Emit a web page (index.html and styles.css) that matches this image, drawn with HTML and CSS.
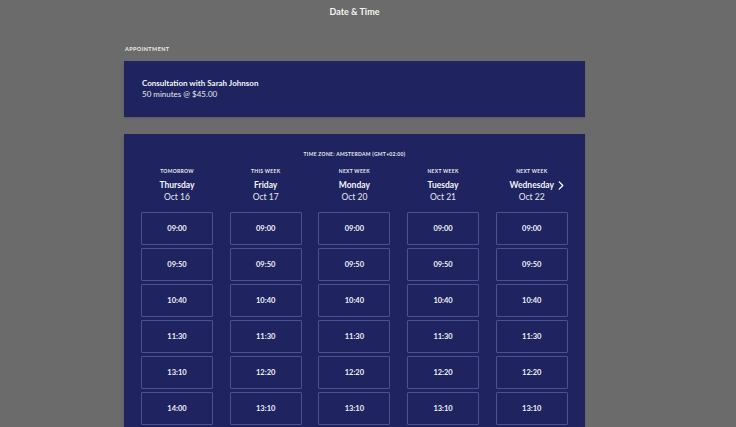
FILE: index.html
```html
<!DOCTYPE html>
<html>
<head>
<meta charset="utf-8">
<link rel="stylesheet" href="styles.css">
</head>
<body>
<div class="page">
  <h1 class="title">Date &amp; Time</h1>
  <div class="label">APPOINTMENT</div>
  <div class="card appt">
    <div class="appt-name">Consultation with Sarah Johnson</div>
    <div class="appt-meta">50 minutes @ $45.00</div>
  </div>
  <div class="card picker">
    <div class="tz">TIME ZONE: AMSTERDAM (GMT+02:00)</div>
    <div class="cols">
      <div class="col">
        <div class="day-head"><div class="when">TOMORROW</div><div class="dname">Thursday</div><div class="ddate">Oct 16</div></div>
        <button class="slot">09:00</button><button class="slot">09:50</button><button class="slot">10:40</button><button class="slot">11:30</button><button class="slot">13:10</button><button class="slot">14:00</button>
      </div>
      <div class="col">
        <div class="day-head"><div class="when">THIS WEEK</div><div class="dname">Friday</div><div class="ddate">Oct 17</div></div>
        <button class="slot">09:00</button><button class="slot">09:50</button><button class="slot">10:40</button><button class="slot">11:30</button><button class="slot">12:20</button><button class="slot">13:10</button>
      </div>
      <div class="col">
        <div class="day-head"><div class="when">NEXT WEEK</div><div class="dname">Monday</div><div class="ddate">Oct 20</div></div>
        <button class="slot">09:00</button><button class="slot">09:50</button><button class="slot">10:40</button><button class="slot">11:30</button><button class="slot">12:20</button><button class="slot">13:10</button>
      </div>
      <div class="col">
        <div class="day-head"><div class="when">NEXT WEEK</div><div class="dname">Tuesday</div><div class="ddate">Oct 21</div></div>
        <button class="slot">09:00</button><button class="slot">09:50</button><button class="slot">10:40</button><button class="slot">11:30</button><button class="slot">12:20</button><button class="slot">13:10</button>
      </div>
      <div class="col">
        <div class="day-head"><div class="when">NEXT WEEK</div><div class="dname">Wednesday<svg class="next" viewBox="0 0 6 10" width="6" height="9"><path d="M1 1 L5 5 L1 9" fill="none" stroke="#ffffff" stroke-width="1.4" stroke-linecap="round" stroke-linejoin="round"/></svg></div><div class="ddate">Oct 22</div></div>
        <button class="slot">09:00</button><button class="slot">09:50</button><button class="slot">10:40</button><button class="slot">11:30</button><button class="slot">12:20</button><button class="slot">13:10</button>
      </div>
    </div>
  </div>
</div>
</body>
</html>
```
FILE: styles.css
```css
html, body {
  margin: 0;
  padding: 0;
  background: #6b6b6b;
  height: 100%;
  overflow: hidden;
}
body {
  font-family: Lato, "Open Sans", sans-serif;
  color: #ffffff;
}
.page {
  width: 461px;
  margin-left: 124px;
}
.title {
  margin: 0;
  padding-top: 6px;
  text-align: center;
  font-size: 9px;
  font-weight: 700;
  line-height: 11px;
  color: #f4f4f4;
}
.label {
  margin-top: 28px;
  padding-left: 1px;
  font-size: 5.5px;
  font-weight: 700;
  letter-spacing: 0.4px;
  line-height: 8px;
  color: #eeeeee;
}
.card {
  background: #1f2461;
  box-shadow: 0 1px 2px rgba(0,0,0,0.15);
}
.appt {
  margin-top: 8px;
  height: 56px;
  box-sizing: border-box;
  padding: 16px 18px 0;
}
.appt-name {
  font-size: 8px;
  font-weight: 700;
  line-height: 12px;
  color: #f2f2f7;
}
.appt-meta {
  font-size: 8px;
  line-height: 11px;
  color: #e6e6ee;
}
.picker {
  margin-top: 17px;
  padding: 17px 17px 20px;
}
.tz {
  text-align: center;
  font-size: 5px;
  font-weight: 700;
  letter-spacing: 0.3px;
  line-height: 7px;
  color: #e8e8f0;
}
.cols {
  margin-top: 10px;
  display: grid;
  grid-template-columns: repeat(5, 72px);
  column-gap: 16.7px;
}
.col {
  display: flex;
  flex-direction: column;
  gap: 3px;
}
.day-head {
  text-align: center;
  margin-bottom: 6px;
}
.when {
  font-size: 5px;
  font-weight: 700;
  letter-spacing: 0.3px;
  line-height: 7px;
  color: #e8e8f0;
}
.dname {
  margin-top: 4px;
  font-size: 8.5px;
  font-weight: 700;
  line-height: 12px;
  color: #f2f2f7;
  position: relative;
}
.next {
  position: absolute;
  left: calc(50% + 26px);
  top: 1.5px;
}
.ddate {
  font-size: 8.5px;
  line-height: 12px;
  color: #e6e6ee;
}
.slot {
  height: 33px;
  width: 72px;
  box-sizing: border-box;
  background: transparent;
  border: 1px solid #4a5193;
  border-radius: 1px;
  color: #f0f0f6;
  font-family: Lato, "Open Sans", sans-serif;
  font-size: 7.5px;
  font-weight: 700;
  padding: 0;
}
```
